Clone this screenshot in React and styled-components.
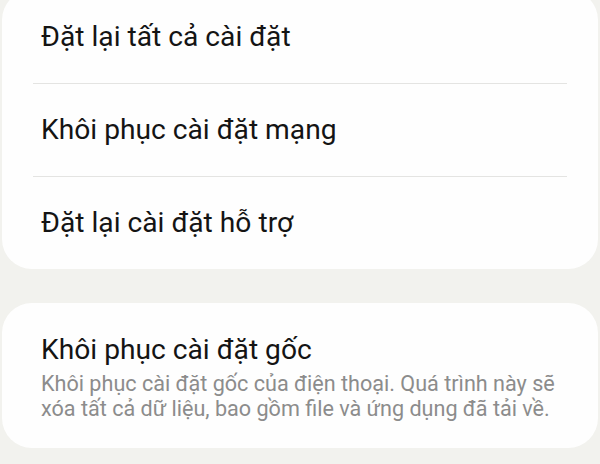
import styled, { createGlobalStyle } from 'styled-components';

const GlobalStyle = createGlobalStyle`
	html, body {
		margin: 0;
		padding: 0;
		background: #f2f2ee;
	}
	body {
		font-family: Roboto, "Noto Sans", "DejaVu Sans", sans-serif;
	}
`

const resetItems = [
	'Đặt lại tất cả cài đặt',
	'Khôi phục cài đặt mạng',
	'Đặt lại cài đặt hỗ trợ',
];

const App = () => {
	return (
		<>
			<GlobalStyle />
			<Page>
				<Card first>
					{resetItems.map((label, i) => (
						<div key={label}>
							{i > 0 && <Divider />}
							<Row>
								<Title>{ label }</Title>
							</Row>
						</div>
					))}
				</Card>
				<Card>
					<DetailRow>
						<Title>Khôi phục cài đặt gốc</Title>
						<Summary>
							Khôi phục cài đặt gốc của điện thoại. Quá trình này sẽ xóa tất cả dữ liệu, bao gồm file và ứng dụng đã tải về.
						</Summary>
					</DetailRow>
				</Card>
			</Page>
		</>
	)
}

export default App;

const Page = styled.div`
	width: 600px;
	height: 464px;
	overflow: hidden;
	box-sizing: border-box;
	padding: 0 2px;
	display: flex;
	flex-direction: column;
	gap: 34px;
	background: #f2f2ee;
`

const Card = styled.div`
	background: #fefefe;
	border-radius: 30px;
	margin-top: ${ props => props.first ? '-10px' : 0 };
	display: flex;
	flex-direction: column;
`

const Row = styled.div`
	height: 93px;
	display: flex;
	align-items: center;
	padding-left: 39px;
`

const Divider = styled.div`
	height: 1px;
	margin: 0 31px;
	background: #e4e4e2;
	margin-bottom: -1px;
	position: relative;
`

const DetailRow = styled.div`
	padding: 31px 34px 27px 39px;
	display: flex;
	flex-direction: column;
`

const Title = styled.span`
	font-size: 28.2px;
	line-height: 32px;
	color: #141414;
	font-weight: 400;
`

const Summary = styled.p`
	margin: 5px 0 0;
	font-size: 21.6px;
	line-height: 25px;
	color: #8c8c8c;
`
